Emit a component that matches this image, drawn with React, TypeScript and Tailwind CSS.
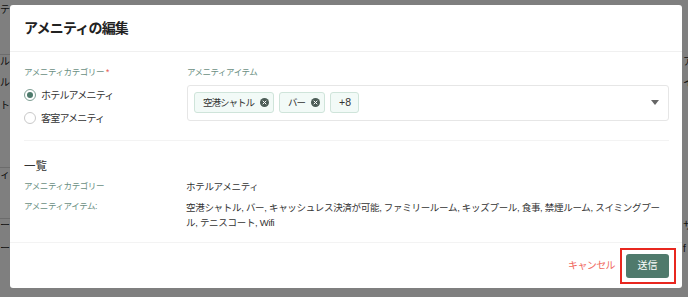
import React from 'react';

const font = { fontFamily: '"Liberation Sans", "Noto Sans CJK JP", sans-serif' };

// fragments of the page that peek out beside the dialog
const leftBg = [
  { gap: 'h-[3px]', t: 'テ' },
  { gap: 'h-[38px] border-b border-[#d8d8d8]', t: 'ール' },
  { gap: 'h-[7px]', t: 'ール' },
  { gap: 'h-[9px]', t: 'ート' },
  { gap: 'h-[55px] border-b border-[#d8d8d8]', t: 'ィ' },
  { gap: 'h-[37px] border-b border-[#d8d8d8]', t: 'ター' },
  { gap: 'h-[9px]', t: 'ー' },
];

const rightBg = [
  { gap: 'h-[55px]', t: 'ア' },
  { gap: 'h-[7px]', t: 'イ' },
  { gap: 'h-[129px]', t: 'サ' },
  { gap: 'h-[9px]', t: 'f' },
];

function CloseDot() {
  return (
    <span className="ml-[6px] inline-flex h-[9px] w-[9px] items-center justify-center rounded-full bg-[#4d5d57]">
      <svg width="5" height="5" viewBox="0 0 10 10">
        <path d="M2 2 L8 8 M8 2 L2 8" stroke="#fff" strokeWidth="2" strokeLinecap="round" />
      </svg>
    </span>
  );
}

function Tag({ children, close = true }: { children: React.ReactNode; close?: boolean }) {
  return (
    <span
      className={
        'flex h-[21px] items-center rounded-[3px] border border-[#cfe4da] bg-[#f2faf7] pl-[8px] text-[#333] ' +
        (close ? 'pr-[4px] text-[9.5px] tracking-[-1px]' : 'pr-[7px] text-[10.5px]')
      }
    >
      {children}
      {close && <CloseDot />}
    </span>
  );
}

function Radio({ checked, label }: { checked?: boolean; label: string }) {
  return (
    <div className="flex h-[23px] items-center">
      <span
        className={
          'flex h-[12px] w-[12px] items-center justify-center rounded-full border bg-white ' +
          (checked ? 'border-[#7f9f94]' : 'border-[#c9c9c9]')
        }
      >
        {checked && <span className="h-[6px] w-[6px] rounded-full bg-[#4d7a6b]" />}
      </span>
      <span className="ml-[5px] text-[10px] tracking-[-0.8px] text-[#333]">{label}</span>
    </div>
  );
}

export default function App() {
  return (
    <div className="relative h-[297px] w-[688px] overflow-hidden bg-white" style={font}>
      {/* page behind the dialog */}
      <div className="flex h-full">
        <div className="w-[10px] overflow-hidden">
          <div className="flex w-[10px] flex-col items-end text-[10px] text-[#222]">
            {leftBg.map((r, i) => (
              <React.Fragment key={i}>
                <div className={r.gap + ' w-[40px] shrink-0'} />
                <div className="h-[14px] whitespace-nowrap leading-[14px]">{r.t}</div>
              </React.Fragment>
            ))}
          </div>
        </div>
        <div className="flex-1" />
        <div className="w-[6px] overflow-hidden pl-[1px] text-[10px] text-[#222]">
          <div className="flex flex-col">
            {rightBg.map((r, i) => (
              <React.Fragment key={i}>
                <div className={r.gap} />
                <div className="h-[14px] whitespace-nowrap leading-[14px]">{r.t}</div>
              </React.Fragment>
            ))}
          </div>
        </div>
      </div>

      {/* overlay + dialog */}
      <div className="absolute inset-0 bg-black/50 pl-[10px] pt-[5px]">
        <div className="flex h-[283px] w-[672px] flex-col rounded-[3px] bg-white">
          <div className="flex h-[47px] shrink-0 items-center border-b border-[#f0f0f0] px-[14px]">
            <h1 className="text-[14px] font-bold tracking-[-0.8px] text-[#222]">アメニティの編集</h1>
          </div>

          <div className="flex flex-1 flex-col pl-[14px] pr-[13px]">
            <div className="flex border-b border-[#f3f3f3] pt-[14px] pb-[10px]">
              <div className="w-[163px]">
                <div className="text-[8.5px] tracking-[-0.4px] text-[#6b8f83]">
                  アメニティカテゴリー <span className="text-[#e5574b]">*</span>
                </div>
                <div className="mt-[5px]">
                  <Radio checked label="ホテルアメニティ" />
                  <Radio label="客室アメニティ" />
                </div>
              </div>
              <div className="flex-1">
                <div className="text-[8.5px] tracking-[-0.5px] text-[#6b8f83]">アメニティアイテム</div>
                <div className="mt-[6px] flex h-[36px] items-center rounded-[3px] border border-[#e6e6e6] pl-[6px] pr-[9px]">
                  <div className="flex flex-1 items-center gap-[5px]">
                    <Tag>空港シャトル</Tag>
                    <Tag>バー</Tag>
                    <Tag close={false}>+8</Tag>
                  </div>
                  <svg width="8" height="5" viewBox="0 0 8 5">
                    <path d="M0 0 H8 L4 5 Z" fill="#666" />
                  </svg>
                </div>
              </div>
            </div>

            <div className="pt-[17px] text-[11.5px] text-[#333]">一覧</div>
            <div className="mt-[5px] flex items-start">
              <div className="w-[162px] text-[8.5px] tracking-[-0.4px] text-[#6b8f83]">アメニティカテゴリー</div>
              <div className="flex-1 text-[9.5px] tracking-[-0.3px] text-[#333]">ホテルアメニティ</div>
            </div>
            <div className="mt-[6px] flex items-start">
              <div className="w-[162px] text-[8.5px] tracking-[-0.4px] text-[#6b8f83]">アメニティアイテム:</div>
              <div className="flex-1 pr-[4px] text-[9.5px] leading-[15px] tracking-[-0.3px] text-[#333]">
                空港シャトル, バー, キャッシュレス決済が可能, ファミリールーム, キッズプール, 食事, 禁煙ルーム, スイミングプール, テニスコート, Wifi
              </div>
            </div>
          </div>

          <div className="flex h-[46px] shrink-0 items-center justify-end border-t border-[#f3f3f3] pr-[13px]">
            <button className="text-[10px] tracking-[-0.6px] text-[#f0675c]">キャンセル</button>
            <div className="relative ml-[11px]">
              <button className="flex h-[24px] w-[43px] items-center justify-center rounded-[3px] bg-[#4f7a6c] text-[10px] text-white">
                送信
              </button>
              <span className="absolute -bottom-[6px] -left-[6px] -right-[7px] -top-[6px] border-2 border-[#e8271f]" />
            </div>
          </div>
        </div>
      </div>
    </div>
  );
}
